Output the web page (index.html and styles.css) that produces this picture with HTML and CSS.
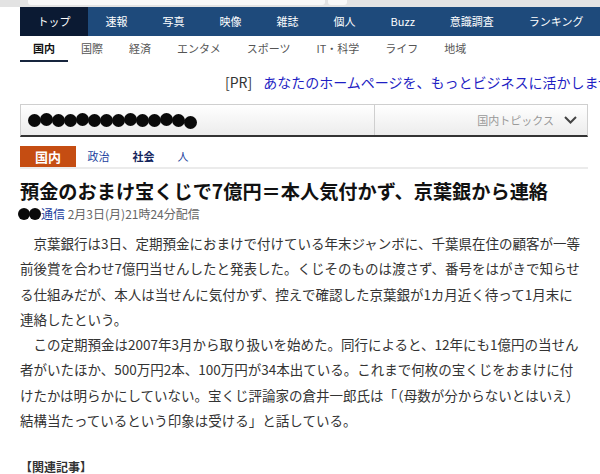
FILE: index.html
```html
<!DOCTYPE html>
<html lang="ja">
<head>
    <meta charset="UTF-8">
    <title>預金のおまけ宝くじで7億円＝本人気付かず、京葉銀から連絡</title>
    <link rel="stylesheet" href="styles.css">
</head>
<body>
    <div class="topbar"><span class="wide"></span><span class="small"></span></div>

    <div class="page">
        <nav class="gnav">
            <a class="current" href="#">トップ</a>
            <a href="#">速報</a>
            <a href="#">写真</a>
            <a href="#">映像</a>
            <a href="#">雑誌</a>
            <a href="#">個人</a>
            <a href="#">Buzz</a>
            <a href="#">意識調査</a>
            <a href="#">ランキング</a>
        </nav>

        <nav class="snav">
            <a class="current" href="#">国内</a>
            <a href="#">国際</a>
            <a href="#">経済</a>
            <a href="#">エンタメ</a>
            <a href="#">スポーツ</a>
            <a href="#">IT・科学</a>
            <a href="#">ライフ</a>
            <a href="#">地域</a>
        </nav>

        <div class="pr"><span class="pr-label">[PR]</span><a href="#">あなたのホームページを、もっとビジネスに活かしませんか？</a></div>

        <div class="topics">
            <div class="topics-left">
                <!-- 伏せ字 -->
                <span class="dot"></span><span class="dot up"></span><span class="dot"></span><span class="dot"></span><span class="dot up"></span><span class="dot"></span><span class="dot"></span><span class="dot"></span><span class="dot up"></span><span class="dot"></span><span class="dot"></span><span class="dot up"></span><span class="dot"></span><span class="dot down"></span>
            </div>
            <div class="topics-right">
                <span>国内トピックス</span>
                <svg class="chevron" width="13" height="8" viewBox="0 0 13 8"><polyline points="1,1 6.5,6.5 12,1" fill="none" stroke="#444" stroke-width="2"/></svg>
            </div>
        </div>

        <div class="cats">
            <a class="current" href="#">国内</a>
            <a href="#">政治</a>
            <a class="strong" href="#">社会</a>
            <a href="#">人</a>
        </div>

        <h1 class="title">預金のおまけ宝くじで7億円＝本人気付かず、京葉銀から連絡</h1>
        <p class="byline"><span class="mask"><span class="dot"></span><span class="dot"></span></span><a href="#">通信</a> 2月3日(月)21時24分配信</p>

        <div class="article">
            <p>京葉銀行は3日、定期預金におまけで付けている年末ジャンボに、千葉県在住の顧客が一等<br>前後賞を合わせ7億円当せんしたと発表した。くじそのものは渡さず、番号をはがきで知らせ<br>る仕組みだが、本人は当せんに気付かず、控えで確認した京葉銀が1カ月近く待って1月末に<br>連絡したという。</p>
            <p>この定期預金は2007年3月から取り扱いを始めた。同行によると、12年にも1億円の当せん<br>者がいたほか、500万円2本、100万円が34本出ている。これまで何枚の宝くじをおまけに付<br>けたかは明らかにしていない。宝くじ評論家の倉井一郎氏は「（母数が分からないとはいえ）<br>結構当たっているという印象は受ける」と話している。</p>
        </div>

        <p class="related">【関連記事】</p>
    </div>
</body>
</html>
```

FILE: styles.css
```css
body {
    margin: 0;
    overflow: hidden;
    background-color: #fff;
    font-family: "Noto Sans CJK JP", "Noto Sans", sans-serif;
    color: #333;
}

a {
    text-decoration: none;
}

.topbar {
    height: 7px;
    background-color: #e3e3e3;
    display: flex;
    gap: 3px;
    padding-left: 28px;
}

.topbar span {
    height: 5px;
    background-color: #f8f8f8;
    border-radius: 0 0 3px 3px;
}

.topbar .wide {
    width: 297px;
}

.topbar .small {
    width: 19px;
}

.page {
    padding-left: 20px;
}

/* グローバルナビ */
.gnav {
    display: flex;
    height: 29px;
    background-color: #1e4a7b;
    white-space: nowrap;
}

.gnav a {
    color: #fff;
    font-size: 11px;
    line-height: 29px;
    padding: 0 17.5px;
}

.gnav a.current {
    background-color: #0b1a33;
}

/* サブナビ */
.snav {
    display: flex;
    height: 26px;
    white-space: nowrap;
}

.snav a {
    color: #555;
    font-size: 11px;
    line-height: 24px;
    padding: 0 13px;
    border-bottom: 2px solid transparent;
}

.snav a.current {
    color: #111;
    font-weight: bold;
    border-bottom-color: #17253d;
}

.pr {
    margin-top: 10px;
    padding-left: 205px;
    font-size: 14px;
    line-height: 20px;
    white-space: nowrap;
    color: #333;
}

.pr-label {
    margin-right: 11px;
}

.pr a {
    color: #1f1fc4;
}

/* トピックス */
.topics {
    margin-top: 12px;
    display: flex;
    width: 566px;
    height: 30px;
    border: 1px solid #cfcfcf;
    border-bottom: 2px solid #333;
    background: linear-gradient(#fff, #ececec);
}

.topics-left {
    width: 346px;
    padding-left: 7px;
    border-right: 1px solid #cfcfcf;
    display: flex;
    align-items: center;
}

.dot {
    display: inline-block;
    width: 13px;
    height: 13px;
    border-radius: 50%;
    background-color: #0a0a0a;
    margin-right: -1px;
}

.dot.up {
    transform: translateY(-1px);
}

.dot.down {
    transform: translateY(2px);
}

.topics-right {
    flex: 1;
    display: flex;
    justify-content: flex-end;
    align-items: center;
    gap: 10px;
    padding-right: 10px;
    font-size: 11px;
    color: #999;
}

/* カテゴリ */
.cats {
    margin-top: 9px;
    display: flex;
    width: 568px;
    border-bottom: 2px solid #ebebeb;
}

.cats a {
    font-size: 11px;
    line-height: 21px;
    padding: 0 11.5px;
    color: #1c3f9e;
}

.cats a.current {
    background-color: #c54d12;
    color: #fff;
    font-weight: bold;
    font-size: 13px;
    padding: 0 15px;
}

.cats a.strong {
    font-weight: bold;
    color: #14245c;
}

.title {
    margin: 9px 0 0;
    font-size: 19.2px;
    line-height: 26px;
    color: #111;
}

.byline {
    margin: 3px 0 0;
    font-size: 12px;
    line-height: 14px;
    color: #666;
    display: flex;
    align-items: center;
    white-space: pre;
}

.byline .mask {
    display: inline-flex;
    margin-left: -2px;
}

.byline .dot {
    width: 12px;
    height: 12px;
    margin-right: -1px;
}

.byline a {
    color: #1c3f9e;
    margin-left: 1px;
}

.article {
    margin-top: 10px;
    width: 580px;
    font-size: 13.5px;
    line-height: 25.3px;
    color: #333;
    white-space: nowrap;
}

.article p {
    margin: 0;
    text-indent: 1em;
}

.related {
    margin: 27px 0 0;
    font-size: 12px;
    line-height: 14px;
    font-weight: bold;
    color: #333;
}
```
